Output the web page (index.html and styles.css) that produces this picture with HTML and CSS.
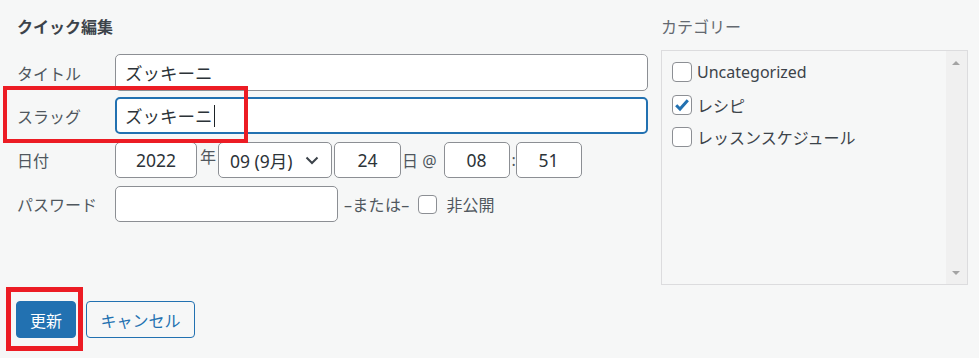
FILE: index.html
```html
<!DOCTYPE html>
<html lang="ja">

<head>
    <meta charset="UTF-8">
    <title>クイック編集</title>
    <link rel="stylesheet" href="styles.css">
</head>

<body>
    <div class="quick-edit">
        <div class="columns">
            <div class="col-left">
                <h2 class="title">クイック編集</h2>
                <div class="row row-title">
                    <span class="label">タイトル</span>
                    <input class="text-field wide" type="text" value="ズッキーニ">
                </div>
                <div class="row row-slug">
                    <span class="label">スラッグ</span>
                    <div class="text-field wide focused">ズッキーニ<span class="caret"></span></div>
                </div>
                <div class="row row-date">
                    <span class="label">日付</span>
                    <input class="text-field num year" type="text" value="2022">
                    <span class="sep sep-year">年</span>
                    <div class="text-field select">
                        <span>09 (9月)</span>
                        <svg width="14" height="9" viewBox="0 0 14 9"><path d="M1.5 1.5 L7 7 L12.5 1.5" fill="none" stroke="#3c434a" stroke-width="2"/></svg>
                    </div>
                    <input class="text-field num day" type="text" value="24">
                    <span class="sep sep-day">日 @</span>
                    <input class="text-field num time" type="text" value="08">
                    <span class="sep sep-colon">:</span>
                    <input class="text-field num time" type="text" value="51">
                </div>
                <div class="row row-pass">
                    <span class="label">パスワード</span>
                    <input class="text-field pass" type="text" value="">
                    <span class="or">–または–</span>
                    <span class="cb cb-private"></span>
                    <span class="private">非公開</span>
                </div>
            </div>
            <div class="col-right">
                <div class="cat-title">カテゴリー</div>
                <div class="cat-box">
                    <ul class="cat-list">
                        <li><span class="cb"></span>Uncategorized</li>
                        <li><span class="cb"><svg width="18" height="18" viewBox="0 0 18 18"><path d="M3.2 9.2 L7 13 L14.8 4.2" fill="none" stroke="#2271b1" stroke-width="3"/></svg></span>レシピ</li>
                        <li><span class="cb"></span>レッスンスケジュール</li>
                    </ul>
                    <div class="scrollbar">
                        <span class="arrow-up"></span>
                        <span class="arrow-down"></span>
                    </div>
                </div>
            </div>
        </div>
        <div class="actions">
            <button class="btn btn-primary">更新</button>
            <button class="btn btn-secondary">キャンセル</button>
        </div>

        <!-- annotation frames -->
        <div class="mark mark-slug"></div>
        <div class="mark mark-update"></div>
    </div>
</body>

</html>
```

FILE: styles.css
```css
body {
    margin: 0;
    background: #f6f7f7;
    font-family: "Noto Sans", "Noto Sans CJK JP", sans-serif;
    color: #50575e;
}

.quick-edit {
    position: relative;
    width: 979px;
    height: 358px;
}

.columns {
    display: flex;
}

.col-left {
    width: 631px;
    padding: 16px 0 0 17px;
}

.col-right {
    width: 307px;
    margin-left: 13px;
    padding-top: 16px;
}

.title {
    margin: 0;
    font-size: 16px;
    line-height: 22px;
    font-weight: bold;
    color: #3c434a;
}

.row {
    display: flex;
    align-items: center;
}

.row-title {
    margin-top: 16px;
}

.row-slug {
    margin-top: 6px;
}

.row-date,
.row-pass {
    margin-top: 8px;
}

.label {
    width: 98px;
    font-size: 16px;
    color: #50575e;
}

.text-field {
    box-sizing: border-box;
    height: 37px;
    margin: 0;
    padding: 0 9px;
    border: 1px solid #8c8f94;
    border-radius: 5px;
    background: #fff;
    font-family: "Noto Sans", "Noto Sans CJK JP", sans-serif;
    font-size: 17.5px;
    color: #2c3338;
    outline: none;
}

.wide {
    width: 533px;
}

.focused {
    display: flex;
    align-items: center;
    border: 2px solid #2271b1;
    padding-left: 8px;
}

.caret {
    display: inline-block;
    width: 1px;
    height: 22px;
    margin-left: 1px;
    background: #1d2327;
}

.row-date .text-field,
.row-pass .text-field {
    height: 36px;
}

.num {
    text-align: center;
    padding: 0 4px;
}

.year {
    width: 82px;
}

.day {
    width: 67px;
}

.time {
    width: 66px;
}

.sep {
    font-size: 16px;
    color: #50575e;
}

.sep-year {
    margin: -8px 2px 0 3px;
}

.sep-day {
    margin: 0 7px 0 1px;
}

.sep-colon {
    margin: 0 2px;
    width: 2px;
}

.select {
    display: flex;
    align-items: center;
    justify-content: space-between;
    width: 114px;
    padding: 0 12px 0 11px;
    margin-right: 2px;
}

.pass {
    width: 223px;
}

.or {
    margin-left: 6px;
    font-size: 16px;
    letter-spacing: 0.3px;
}

.cb {
    box-sizing: border-box;
    display: inline-flex;
    align-items: center;
    justify-content: center;
    width: 20px;
    height: 20px;
    border: 1px solid #8c8f94;
    border-radius: 4px;
    background: #fff;
}

.cb-private {
    width: 19px;
    height: 19px;
    margin-left: 8px;
}

.private {
    margin-left: 10px;
    font-size: 16px;
}

.cat-title {
    font-size: 16px;
    line-height: 22px;
    color: #646970;
}

.cat-box {
    box-sizing: border-box;
    display: flex;
    height: 235px;
    margin-top: 12px;
    border: 1px solid #dcdcde;
}

.cat-list {
    flex: 1;
    margin: 0;
    padding: 11px 0 0 10px;
    list-style: none;
}

.cat-list li {
    display: flex;
    align-items: center;
    height: 32.5px;
    font-size: 16px;
    color: #3c434a;
}

.cat-list li:first-child {
    margin-top: -6px;
}

.cat-list .cb {
    margin-right: 5px;
}

.scrollbar {
    position: relative;
    width: 21px;
    background: #f0f0f0;
}

.arrow-up,
.arrow-down {
    position: absolute;
    left: 6px;
    width: 0;
    height: 0;
    border-left: 4.5px solid transparent;
    border-right: 4.5px solid transparent;
}

.arrow-up {
    top: 10px;
    border-bottom: 4px solid #a3a3a3;
}

.arrow-down {
    bottom: 9px;
    border-top: 4px solid #a3a3a3;
}

.actions {
    display: flex;
    margin-top: 16px;
    padding-left: 16px;
}

.btn {
    box-sizing: border-box;
    height: 37px;
    border-radius: 4px;
    font-family: "Noto Sans CJK JP", sans-serif;
    font-size: 16px;
    cursor: pointer;
}

.btn-primary {
    width: 60px;
    background: #2271b1;
    border: 1px solid #2271b1;
    color: #fff;
}

.btn-secondary {
    width: 109px;
    margin-left: 10px;
    background: #f6f7f7;
    border: 1px solid #2271b1;
    color: #2271b1;
}

.mark {
    position: absolute;
    box-sizing: border-box;
    border: 4px solid #ec1c24;
}

.mark-slug {
    left: 3px;
    top: 86px;
    width: 245px;
    height: 57px;
}

.mark-update {
    left: 6px;
    top: 287px;
    width: 77px;
    height: 64px;
    border-width: 5px;
}
```
